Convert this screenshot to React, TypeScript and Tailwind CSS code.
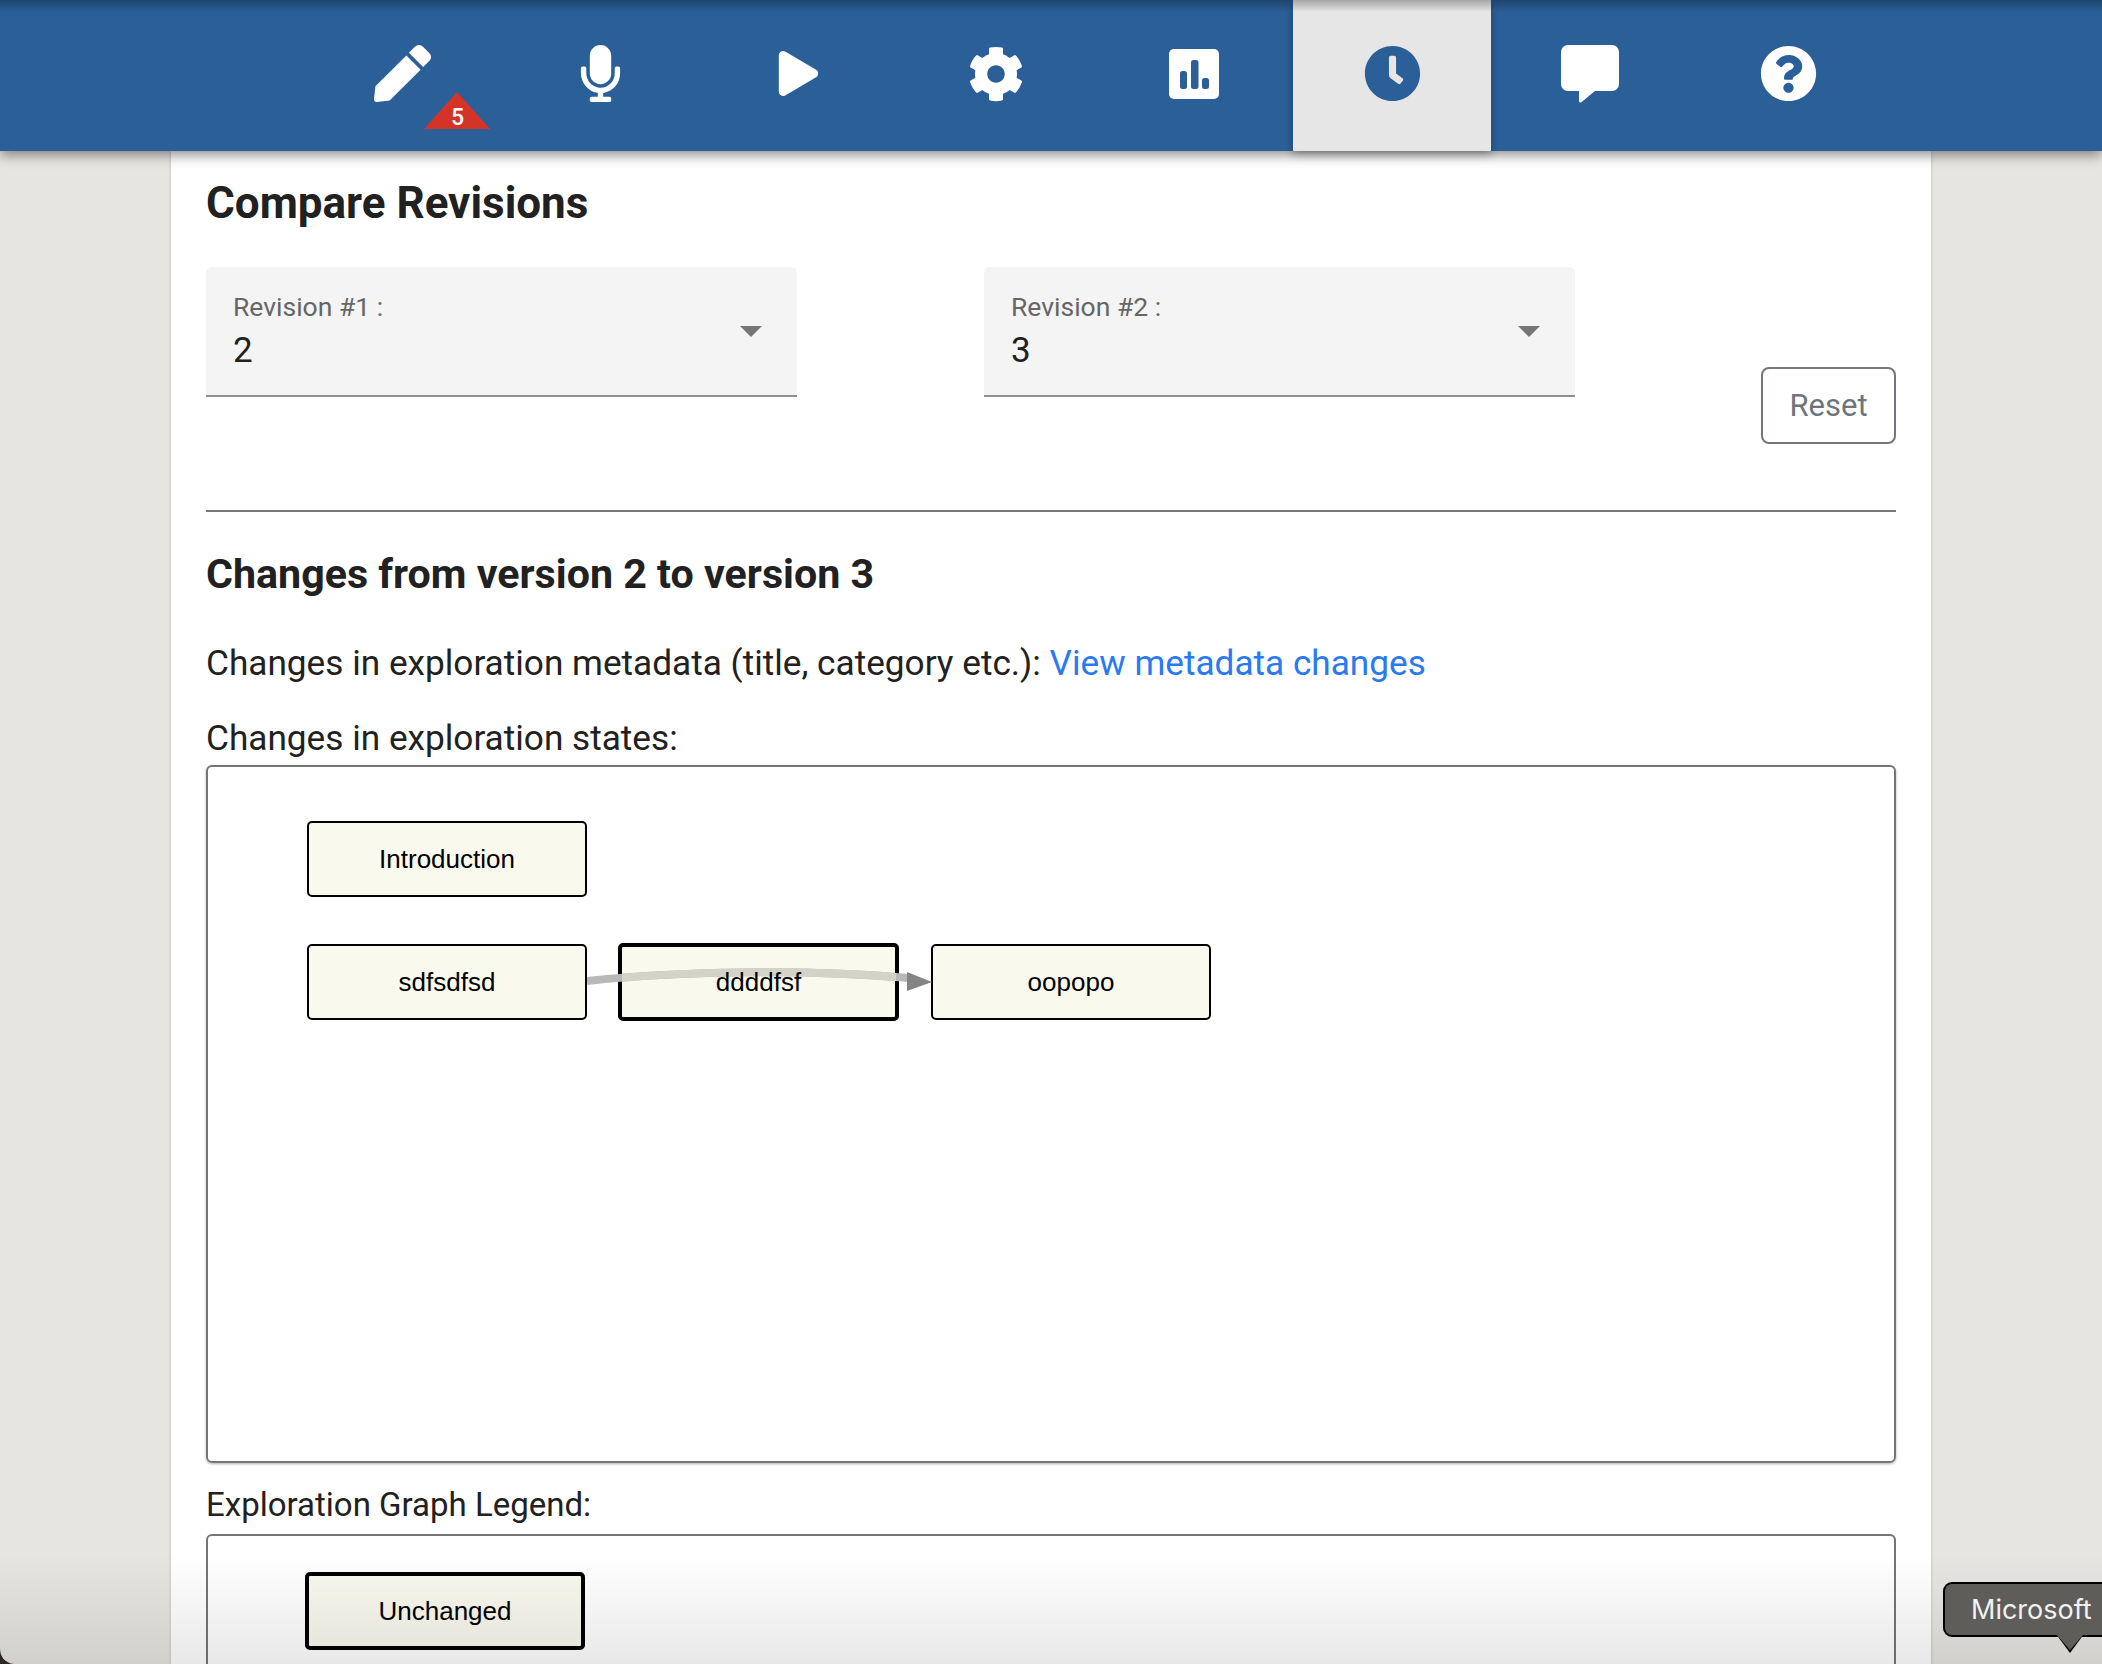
import { FaPen, FaMicrophone, FaPlay, FaCog, FaClock, FaQuestionCircle } from 'react-icons/fa';

function Tab({ active, children }: { active?: boolean; children: React.ReactNode }) {
  return (
    <div
      className={`relative flex h-full w-[198px] items-center justify-center pb-[4px] ${
        active ? 'bg-[#e6e6e6] text-[#2a5f98] shadow-[0_3px_8px_rgba(0,0,0,0.3)]' : 'text-white'
      }`}
    >
      {children}
    </div>
  );
}

function RevisionSelect({ label, value }: { label: string; value: string }) {
  return (
    <div className="relative h-[130px] w-[591px] rounded-t-[6px] border-b-2 border-[#8f8f8f] bg-[#f4f4f4] px-[27px] pt-[22px]">
      <div className="text-[26.5px] leading-[36px] text-[#666666]">{label}</div>
      <div className="mt-[1px] text-[35px] leading-[50px] text-[#212121]">{value}</div>
      <div className="absolute right-[35px] top-[59px] h-0 w-0 border-x-[11px] border-t-[11px] border-x-transparent border-t-[#757575]" />
    </div>
  );
}

function GraphNode({ label, bold, className }: { label: string; bold?: boolean; className: string }) {
  return (
    <div
      className={`flex items-center justify-center rounded-[5px] border-black bg-[#f9f9ee] font-['Liberation_Sans',sans-serif] text-[26px] text-black ${
        bold ? 'border-[4px]' : 'border-2'
      } ${className}`}
    >
      <span className="relative z-10">{label}</span>
    </div>
  );
}

export default function App() {
  return (
    <div className="relative flex h-[1664px] flex-col overflow-hidden bg-[#e6e5e2] font-['Roboto',sans-serif]">
      {/* Top navigation */}
      <div className="relative z-10 flex h-[151px] shrink-0 justify-center bg-[#2a5f98] pl-[88px] shadow-[0_4px_12px_rgba(0,0,0,0.45)]">
        <Tab>
          <FaPen size={57} />
          <div className="absolute left-[121px] top-[92px] h-0 w-0 border-x-[33px] border-b-[37px] border-x-transparent border-b-[#d33427]" />
          <span className="absolute left-[148px] top-[102px] text-[23px] font-medium leading-[32px] text-white">5</span>
        </Tab>
        <Tab>
          <FaMicrophone size={57} />
        </Tab>
        <Tab>
          <FaPlay size={45} />
        </Tab>
        <Tab>
          <FaCog size={56} />
        </Tab>
        <Tab>
          <svg width="50" height="50" viewBox="0 0 50 50">
            <rect width="50" height="50" rx="5" fill="#ffffff" />
            <rect x="11" y="22" width="7" height="18" rx="2.5" fill="#2a5f98" />
            <rect x="22" y="11" width="7.5" height="29" rx="2.5" fill="#2a5f98" />
            <rect x="33" y="29" width="7" height="11" rx="2.5" fill="#2a5f98" />
          </svg>
        </Tab>
        <Tab active>
          <FaClock size={57} />
        </Tab>
        <Tab>
          <svg width="58" height="58" viewBox="0 0 58 58" fill="#ffffff">
            <path d="M7 0H51a7 7 0 0 1 7 7V39a7 7 0 0 1-7 7H34L20 57.5Q18 58 18 56V46H7a7 7 0 0 1-7-7V7a7 7 0 0 1 7-7Z" />
          </svg>
        </Tab>
        <Tab>
          <FaQuestionCircle size={57} />
        </Tab>
        <div className="pointer-events-none absolute inset-x-0 top-0 h-[12px] bg-gradient-to-b from-[rgba(0,0,0,0.28)] to-transparent" />
      </div>

      {/* Main card */}
      <div className="mx-auto w-[1760px] flex-1 bg-white px-[35px] shadow-[0_0_3px_rgba(0,0,0,0.2)]">
        <h1 className="mt-[29px] text-[44px] font-bold leading-[46px] text-[#212121]">Compare Revisions</h1>

        <div className="mt-[41px] flex h-[177px] items-start">
          <RevisionSelect label="Revision #1 :" value="2" />
          <div className="ml-[187px]">
            <RevisionSelect label="Revision #2 :" value="3" />
          </div>
          <button className="ml-auto mt-[100px] h-[77px] w-[135px] rounded-[8px] border-2 border-[#72777e] pt-[1px] text-[31px] text-[#6c757d]">
            Reset
          </button>
        </div>

        <div className="mt-[66px] h-[2px] bg-[#777777]" />

        <h2 className="mt-[39px] text-[41.2px] font-bold leading-[46px] text-[#212121]">Changes from version 2 to version 3</h2>

        <p className="mt-[44px] text-[35.2px] leading-[44px] text-[#212121]">
          Changes in exploration metadata (title, category etc.): <span className="text-[#2979f2]">View metadata changes</span>
        </p>

        <p className="mt-[31px] text-[35.2px] leading-[44px] text-[#212121]">Changes in exploration states:</p>

        <div className="relative mt-[5px] h-[698px] rounded-[6px] border-2 border-[#757575] shadow-[0_1px_3px_rgba(0,0,0,0.3)]">
          <GraphNode label="Introduction" className="absolute left-[99px] top-[54px] h-[76px] w-[280px]" />
          <GraphNode label="sdfsdfsd" className="absolute left-[99px] top-[177px] h-[76px] w-[280px]" />
          <GraphNode label="ddddfsf" bold className="absolute left-[410px] top-[176px] h-[78px] w-[281px]" />
          <GraphNode label="oopopo" className="absolute left-[723px] top-[177px] h-[76px] w-[280px]" />
          {/* edge from sdfsdfsd to oopopo, paler where it crosses the middle node */}
          <svg className="absolute left-[379px] top-[190px]" width="350" height="40" viewBox="0 0 350 40">
            <defs>
              <clipPath id="edge-over-node">
                <rect x="35" y="0" width="274" height="40" />
              </clipPath>
            </defs>
            <path d="M0 24C90 14 220 12 322 21" fill="none" stroke="#b8b8b8" strokeWidth="8" />
            <path d="M0 24C90 14 220 12 322 21" fill="none" stroke="#d3d3c8" strokeWidth="8" clipPath="url(#edge-over-node)" />
            <path d="M320 15L345 25L320 34Z" fill="#848484" />
          </svg>
        </div>

        <p className="mt-[20px] text-[33px] leading-[44px] text-[#212121]">Exploration Graph Legend:</p>

        <div className="mt-[7px] h-[300px] rounded-[6px] border-2 border-[#757575] pl-[97px] pt-[36px]">
          <GraphNode label="Unchanged" bold className="h-[78px] w-[280px]" />
        </div>
      </div>

      {/* Fade over the bottom of the page */}
      <div className="pointer-events-none absolute inset-x-0 bottom-0 h-[110px] bg-gradient-to-b from-transparent to-[rgba(0,0,0,0.09)]" />

      {/* Desktop corner showing at the bottom left */}
      <svg className="absolute bottom-0 left-0" width="14" height="16" viewBox="0 0 14 16">
        <path d="M0 0C0 9 5 15 14 16H0Z" fill="#2e2620" />
      </svg>

      {/* OS tooltip cut off by the right edge */}
      <div className="absolute left-[2053px] top-[1630px] h-0 w-0 border-x-[17px] border-t-[23px] border-x-transparent border-t-black" />
      <div className="absolute left-[1943px] top-[1582px] h-[55px] w-[200px] rounded-l-[9px] border-2 border-black bg-[#5e5d59] pl-[26px] font-['Inter',sans-serif] text-[27px] leading-[51px] text-[#f2f2f2] whitespace-nowrap">
        Microsoft
      </div>
      <div className="absolute left-[2056px] top-[1634px] h-0 w-0 border-x-[14px] border-t-[16px] border-x-transparent border-t-[#5e5d59]" />
    </div>
  );
}
